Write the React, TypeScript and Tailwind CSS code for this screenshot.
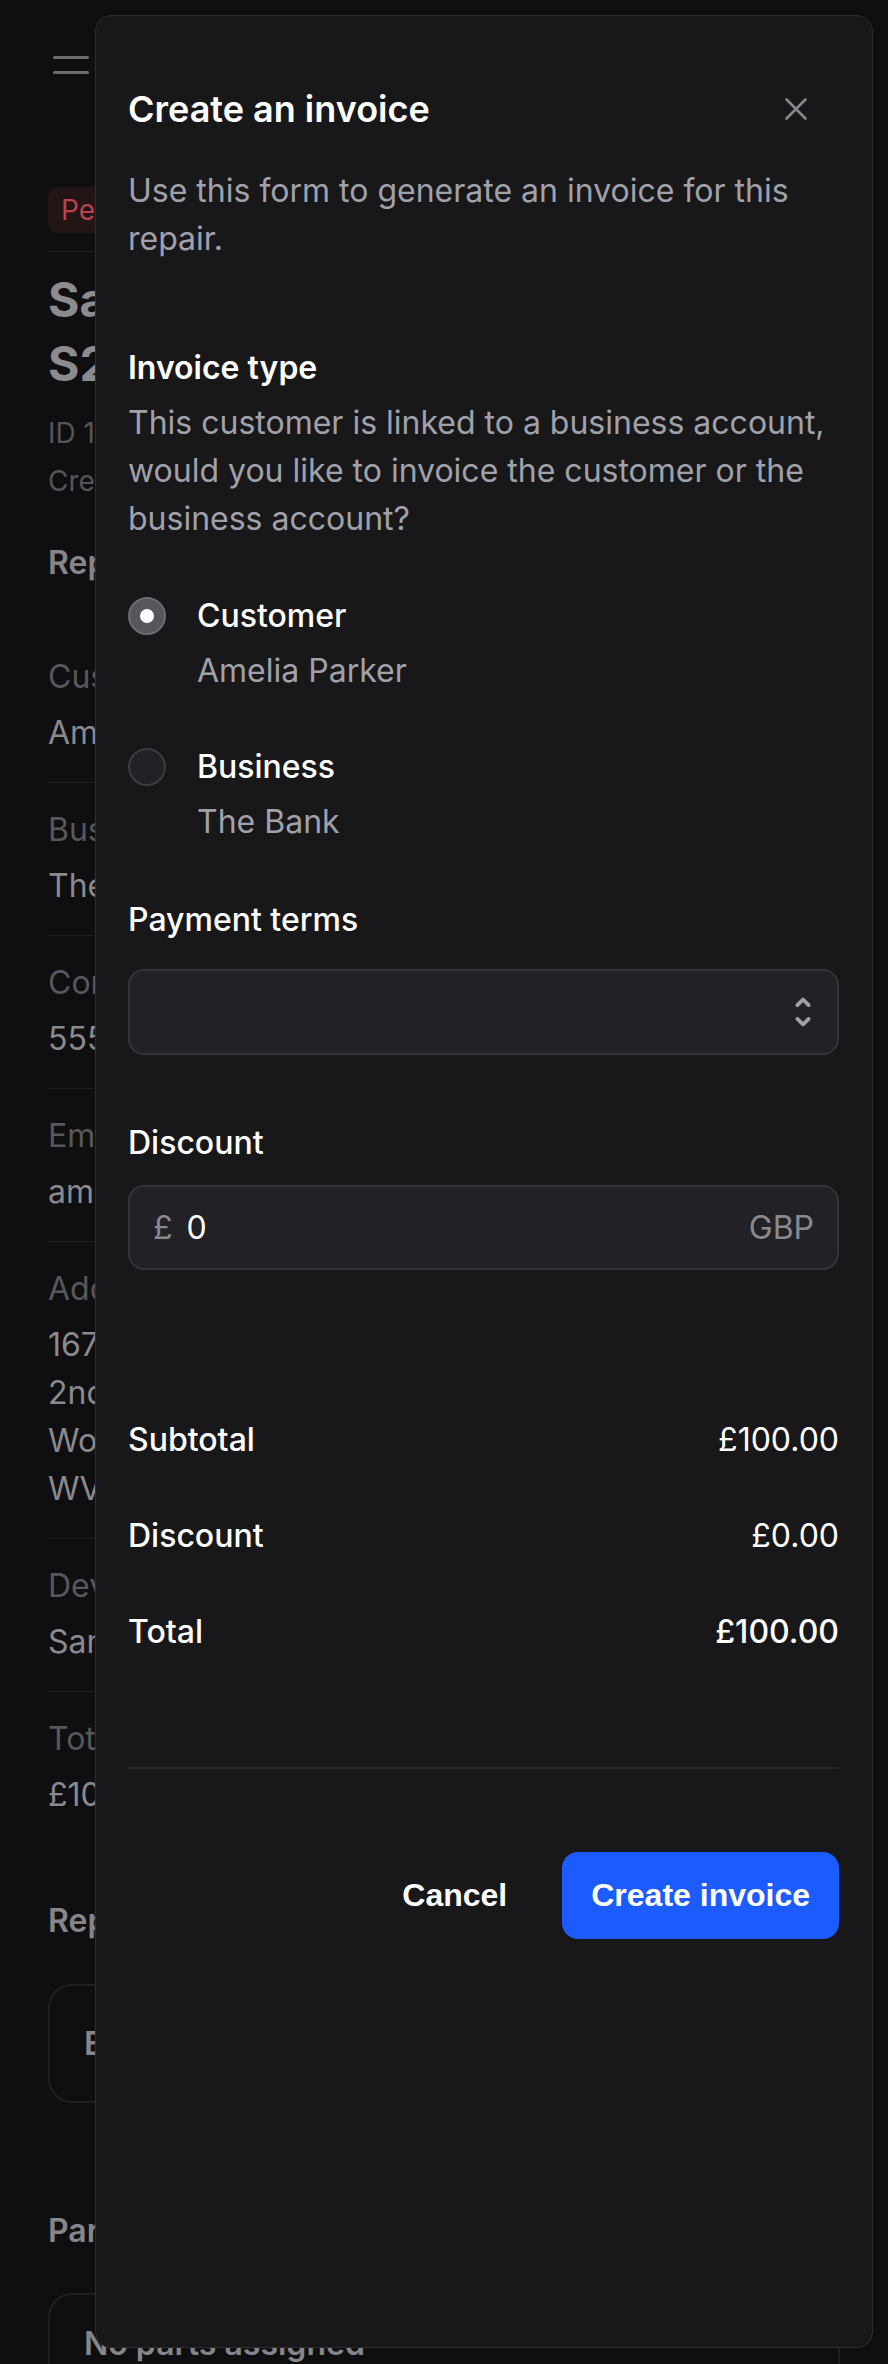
import React from "react";

const rows: { label: string; lines: string[] }[] = [
  { label: "Customer", lines: ["Amelia Parker"] },
  { label: "Business", lines: ["The Bank"] },
  { label: "Contact number", lines: ["555 0192 3344"] },
  { label: "Email", lines: ["amelia.parker@example.com"] },
  {
    label: "Address",
    lines: ["167 High Street", "2nd Floor", "Wolverhampton", "WV1 1AA"],
  },
  { label: "Device", lines: ["Samsung Galaxy S23"] },
  { label: "Total", lines: ["£100.00"] },
];

function MenuIcon() {
  return (
    <div className="flex h-[40px] w-[40px] flex-col justify-center gap-[12px] pl-[5px]">
      <span className="block h-[3px] w-[36px] rounded-full bg-[#6c6c71]" />
      <span className="block h-[3px] w-[36px] rounded-full bg-[#6c6c71]" />
    </div>
  );
}

// the repair page sitting behind the dialog
function RepairPage() {
  return (
    <div className="px-[48px] pt-[45px]">
      <MenuIcon />

      <div className="mt-[102px] inline-flex h-[46px] items-center rounded-[10px] bg-[#231416] px-[13px] text-[28px] text-[#b8434e]">
        Pending
      </div>
      <div className="mt-[18px] h-px bg-[#1d1d20]" />

      <h1 className="mt-[16px] text-[48px] font-bold leading-[64px] text-[#8c8c90]">
        <span className="block">Samsung Galaxy</span>
        <span className="block">S23 Ultra</span>
      </h1>
      <p className="mt-[13px] text-[28px] leading-[48px] text-[#55555a]">ID 1042</p>
      <p className="text-[28px] leading-[48px] text-[#55555a]">Created 12 Mar 2024</p>

      <h2 className="mt-[34px] text-[32px] font-semibold leading-[48px] text-[#86868a]">
        Repair details
      </h2>
      <dl className="mt-[37px]">
        {rows.map((r, i) => (
          <div
            key={r.label}
            className={
              i === 0
                ? "pb-[25px] pt-[29px]"
                : "border-t border-[#1d1d20] pb-[25px] pt-[23px]"
            }
          >
            <dt className="text-[32px] leading-[48px] text-[#58585c]">{r.label}</dt>
            <dd className="mt-[8px] text-[32px] leading-[48px] text-[#8a8a8e]">
              {r.lines.map((l) => (
                <span key={l} className="block">
                  {l}
                </span>
              ))}
            </dd>
          </div>
        ))}
      </dl>

      <h2 className="mt-[53px] text-[32px] font-semibold leading-[48px] text-[#86868a]">
        Repair items
      </h2>
      <div className="mt-[39px] flex h-[119px] items-center rounded-[24px] border-2 border-[#1f1f22] px-[34px]">
        <span className="text-[32px] font-semibold text-[#86868a]">Express screen repair</span>
      </div>

      <h2 className="mt-[104px] text-[32px] font-semibold leading-[48px] text-[#86868a]">
        Parts
      </h2>
      <div className="mt-[38px] h-[160px] rounded-[24px] border-2 border-[#1f1f22] px-[34px] pt-[25px]">
        <span className="text-[32px] font-semibold leading-[48px] text-[#86868a]">
          No parts assigned
        </span>
      </div>
    </div>
  );
}

function Radio({ checked }: { checked?: boolean }) {
  if (checked) {
    return (
      <span className="mt-[5px] flex h-[38px] w-[38px] shrink-0 items-center justify-center rounded-full border-2 border-[#6b6b72] bg-[#56565d]">
        <span className="h-[14px] w-[14px] rounded-full bg-white" />
      </span>
    );
  }
  return (
    <span className="mt-[5px] block h-[38px] w-[38px] shrink-0 rounded-full border-2 border-[#3c3c42] bg-[#222226]" />
  );
}

function Option({ label, sub, checked }: { label: string; sub: string; checked?: boolean }) {
  return (
    <label className="flex gap-[31px]">
      <Radio checked={checked} />
      <span className="flex flex-col">
        <span className="text-[32px] font-medium leading-[48px] text-white">{label}</span>
        <span className="mt-[7px] text-[32px] leading-[48px] text-[#a1a1aa]">{sub}</span>
      </span>
    </label>
  );
}

function SummaryRow({ label, value, strong }: { label: string; value: string; strong?: boolean }) {
  return (
    <div className="flex items-center justify-between text-[32px] leading-[48px] text-white">
      <span className="font-medium">{label}</span>
      <span className={strong ? "font-medium" : "font-normal"}>{value}</span>
    </div>
  );
}

function InvoiceDialog() {
  return (
    <div className="absolute left-[95px] top-[15px] h-[2333px] w-[778px] rounded-[16px] border border-[#2c2c31] bg-[#18181b] pl-[32px] pr-[33px] pt-[69px]">
      <div className="flex h-[48px] items-center justify-between">
        <h2 className="text-[36px] font-semibold leading-[48px] text-white">Create an invoice</h2>
        <svg
          width="24"
          height="24"
          viewBox="0 0 24 24"
          fill="none"
          className="mr-[31px]"
          stroke="#86868c"
          strokeWidth="2.6"
          strokeLinecap="round"
        >
          <path d="M2.5 2.5L21.5 21.5M21.5 2.5L2.5 21.5" />
        </svg>
      </div>

      <p className="mt-[34px] text-[32px] leading-[48px] text-[#a1a1aa]">
        Use this form to generate an invoice for this repair.
      </p>

      <h3 className="mt-[81px] text-[32px] font-semibold leading-[48px] text-white">Invoice type</h3>
      <p className="mt-[7px] text-[32px] leading-[48px] text-[#a1a1aa]">
        This customer is linked to a business account, would you like to invoice the customer or the
        business account?
      </p>

      <div className="mt-[49px] flex flex-col gap-[48px]">
        <Option label="Customer" sub="Amelia Parker" checked />
        <Option label="Business" sub="The Bank" />
      </div>

      <div className="mt-[50px] text-[32px] font-medium leading-[48px] text-white">Payment terms</div>
      <div className="mt-[25px] flex h-[86px] items-center justify-end rounded-[16px] border-2 border-[#34343a] bg-[#222226] pr-[14px]">
        <svg width="40" height="40" viewBox="0 0 16 16" fill="none" stroke="#a1a1aa">
          <path d="M5.75 10.75L8 13L10.25 10.75" strokeWidth="1.5" strokeLinecap="round" strokeLinejoin="round" />
          <path d="M10.25 5.25L8 3L5.75 5.25" strokeWidth="1.5" strokeLinecap="round" strokeLinejoin="round" />
        </svg>
      </div>

      <div className="mt-[64px] text-[32px] font-medium leading-[48px] text-white">Discount</div>
      <div className="mt-[18px] flex h-[85px] items-center rounded-[16px] border-2 border-[#34343a] bg-[#222226] px-[23px] text-[32px]">
        <span className="text-[#88888e]">£</span>
        <span className="ml-[14px] text-white">0</span>
        <span className="ml-auto text-[#88888e]">GBP</span>
      </div>

      <div className="mt-[146px] flex flex-col gap-[48px]">
        <SummaryRow label="Subtotal" value="£100.00" />
        <SummaryRow label="Discount" value="£0.00" />
        <SummaryRow label="Total" value="£100.00" strong />
      </div>

      <div className="mt-[111px] h-[2px] bg-[#232327]" />

      <div className="mt-[82px] flex items-center justify-end gap-[28px] font-['Liberation_Sans',Arial,sans-serif] text-[32px] font-bold text-white">
        <button className="px-[27px] py-[20px]">Cancel</button>
        <button className="h-[87px] rounded-[16px] bg-[#1c5cfe] px-[29px]">Create invoice</button>
      </div>
    </div>
  );
}

export default function App() {
  return (
    <div className="relative h-[2364px] w-full overflow-hidden bg-[#0f0f11] font-['Inter','Noto_Sans',sans-serif]">
      <RepairPage />
      <InvoiceDialog />
    </div>
  );
}
